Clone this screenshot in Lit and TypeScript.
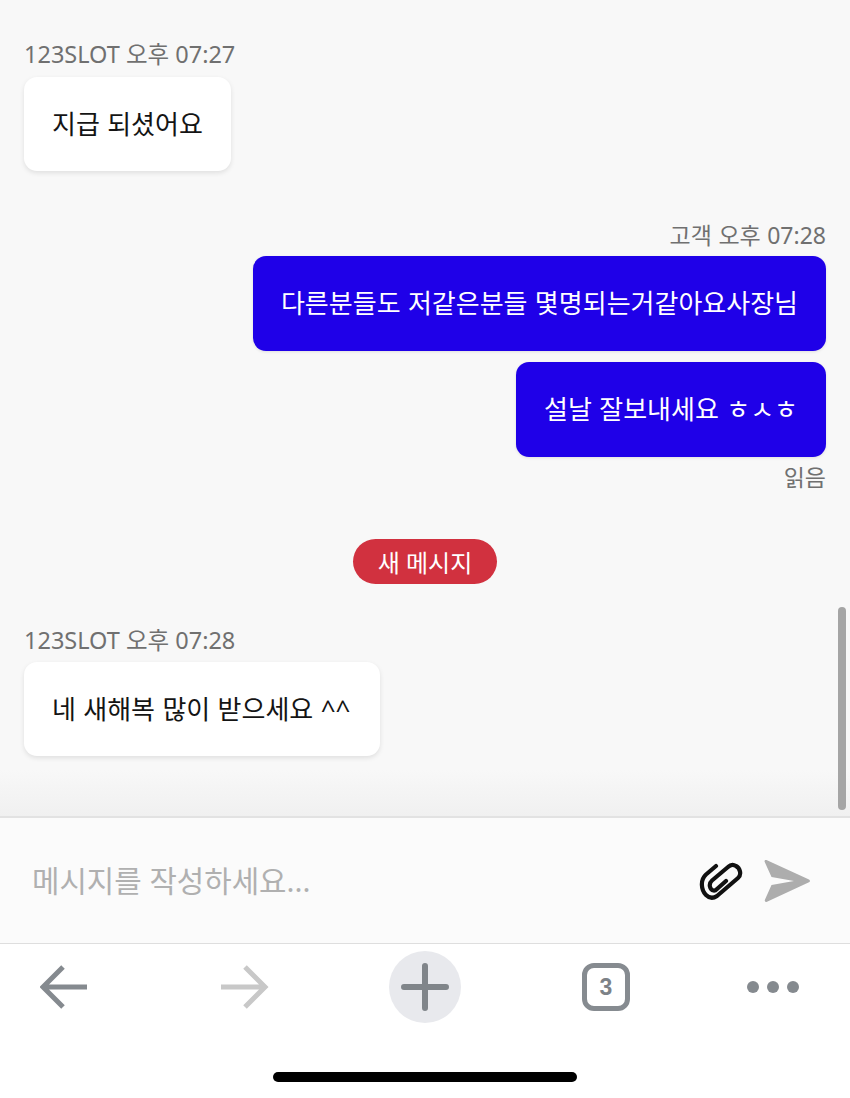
import { LitElement, html, css } from "lit";
import { customElement } from "lit/decorators.js";

@customElement("app-root")
export class AppRoot extends LitElement {
  static styles = css`
    :host {
      display: flex;
      flex-direction: column;
      width: 850px;
      height: 1098px;
      overflow: hidden;
      position: relative;
      background: #fff;
      font-family: "Noto Sans", "Noto Sans CJK KR", sans-serif;
    }
    .chat {
      height: 816px;
      box-sizing: border-box;
      padding: 38px 24px 0;
      background: linear-gradient(#f8f8f8 0, #f8f8f8 770px, #f0f0f0 816px);
      display: flex;
      flex-direction: column;
      align-items: flex-start;
      flex: none;
    }
    .label {
      font-size: 23.5px;
      line-height: 32px;
      color: #707070;
      height: 32px;
      margin-bottom: 7px;
    }
    .bubble {
      box-sizing: border-box;
      padding: 0 28px 3px;
      display: flex;
      align-items: center;
      font-size: 26px;
      word-spacing: 0.6px;
      border-radius: 13px;
      white-space: nowrap;
    }
    .in {
      height: 94px;
      background: #fff;
      color: #141414;
      box-shadow: 0 2px 5px rgba(0, 0, 0, 0.1);
    }
    .wide {
      padding-right: 30px;
    }
    .out {
      height: 95px;
      background: #1f00e8;
      color: #fff;
      align-self: flex-end;
      margin-top: 11px;
      box-shadow: 0 1px 3px rgba(0, 0, 0, 0.1);
    }
    .right {
      align-self: flex-end;
      font-size: 23px;
      word-spacing: 0.5px;
    }
    .l2 {
      margin-top: 48px;
      margin-bottom: 5px;
    }
    .read {
      margin: 4px 0 0;
    }
    .first {
      margin-top: 0;
    }
    .pill {
      align-self: center;
      margin: 46px 0 40px;
      height: 45px;
      padding: 0 25px 1px;
      box-sizing: border-box;
      border-radius: 23px;
      background: #d1313f;
      color: #fff;
      font-size: 24px;
      display: flex;
      align-items: center;
    }
    .l4 {
      margin-bottom: 6px;
    }
    .scroll {
      position: absolute;
      left: 838px;
      top: 607px;
      width: 8px;
      height: 203px;
      border-radius: 4px;
      background: #a5a5a5;
    }
    .input {
      height: 128px;
      box-sizing: border-box;
      flex: none;
      background: #fbfbfb;
      border-top: 2px solid #e2e2e2;
      border-bottom: 1px solid #dedede;
      display: flex;
      align-items: center;
      padding: 0 40px 0 32px;
      font-size: 29.8px;
      color: #b0b0b0;
    }
    .input span {
      flex: 1;
      padding-bottom: 4px;
    }
    .send {
      margin-left: 21px;
    }
    svg {
      display: block;
      flex: none;
    }
    .bar {
      flex: 1;
      display: flex;
      flex-direction: column;
      align-items: center;
      background: #fff;
    }
    .tools {
      align-self: stretch;
      display: flex;
      align-items: center;
      height: 86px;
      padding-left: 40px;
    }
    .g1 { margin-left: 133px; }
    .g2 { margin-left: 120px; }
    .g3 { margin-left: 121px; }
    .g4 { margin-left: 117px; }
    .plus {
      width: 72px;
      height: 72px;
      border-radius: 50%;
      background: #e8e9ed;
      display: flex;
      align-items: center;
      justify-content: center;
    }
    .tabs {
      box-sizing: border-box;
      width: 48px;
      height: 48px;
      border: 5px solid #868b90;
      border-radius: 12px;
      display: flex;
      align-items: center;
      justify-content: center;
      font-family: "Liberation Sans", sans-serif;
      font-weight: 700;
      font-size: 23px;
      color: #7d8287;
    }
    .home {
      width: 304px;
      height: 10px;
      border-radius: 5px;
      background: #000;
      margin-top: 42px;
    }
  `;

  render() {
    return html`
      <div class="chat">
        <div class="label">123SLOT 오후 07:27</div>
        <div class="bubble in">지급 되셨어요</div>
        <div class="label right l2">고객 오후 07:28</div>
        <div class="bubble out first">다른분들도 저같은분들 몇명되는거같아요사장님</div>
        <div class="bubble out">설날 잘보내세요 ㅎㅅㅎ</div>
        <div class="label right read">읽음</div>
        <div class="pill">새 메시지</div>
        <div class="label l4">123SLOT 오후 07:28</div>
        <div class="bubble in wide">네 새해복 많이 받으세요 ^^</div>
      </div>
      <div class="scroll"></div>
      <div class="input">
        <span>메시지를 작성하세요...</span>
        <svg width="44" height="40" viewBox="0 0 44 40" fill="none" stroke="#111" stroke-width="4.200" stroke-linecap="round" stroke-linejoin="round">
          <path d="M17 5 L7 13.500 C1 19 2 29 7 34 C11 38 15 37 18 35 L39 17 C43 13.500 41 7 37 5 C34 3 31 4 29 6 L13 19.500 C9 23 11 29 14.500 29.500 C16 29.800 17 29 18 28 L27 20" />
        </svg>
        <svg class="send" width="46" height="42" viewBox="0 0 46 42">
          <path d="M0.500 1.500 C0.500 0 1.500 -0.500 3 0.300 L45 19.500 C46.300 20.300 46.300 21.700 45 22.300 L3 41.700 C1.500 42.300 0.500 41.500 0.800 40 L7.500 25 L30 21 L7.500 17 Z" fill="#adadad" />
        </svg>
      </div>
      <div class="bar">
        <div class="tools">
          <svg width="48" height="44" viewBox="0 0 48 44" fill="none" stroke="#858a8f" stroke-width="5">
            <path d="M47 22 H3 M23 2 L3 22 L23 42" />
          </svg>
          <svg class="g1" width="48" height="44" viewBox="0 0 48 44" fill="none" stroke="#c8c8c8" stroke-width="5">
            <path d="M0 22 H44 M24 2 L44 22 L24 42" />
          </svg>
          <div class="plus g2">
            <svg width="48" height="48" viewBox="0 0 48 48" fill="none" stroke="#80858a" stroke-width="6" stroke-linecap="round">
              <path d="M3 24 H45 M24 3 V45" />
            </svg>
          </div>
          <div class="tabs g3">3</div>
          <svg class="g4" width="52" height="14" viewBox="0 0 52 14" fill="#858a8f">
            <circle cx="6" cy="7" r="6" />
            <circle cx="26" cy="7" r="6" />
            <circle cx="46" cy="7" r="6" />
          </svg>
        </div>
        <div class="home"></div>
      </div>
    `;
  }
}
